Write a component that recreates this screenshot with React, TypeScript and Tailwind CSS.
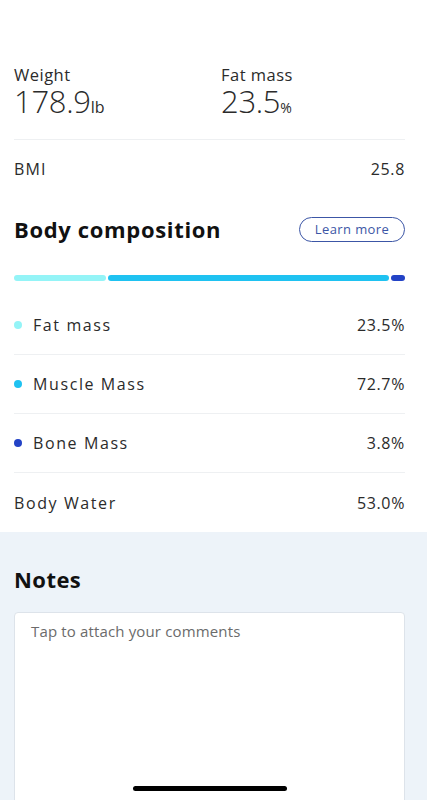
import React from "react";

const font = { fontFamily: "'Open Sans', 'Noto Sans', sans-serif" };

function Row({ dot, label, value, last }: { dot?: string; label: string; value: string; last?: boolean }) {
  return (
    <div className={`flex h-[59px] items-center justify-between ${last ? "" : "border-b border-[#eef0f2]"}`}>
      <div className="flex items-center">
        {dot ? <span className="mr-[11px] ml-[0px] h-[8px] w-[8px] rounded-full" style={{ background: dot }} /> : null}
        <span className="text-[16px] tracking-[0.1em] text-[#2b2b2b]">{label}</span>
      </div>
      <span className="text-[16px] tracking-[0.04em] text-[#2b2b2b]">{value}</span>
    </div>
  );
}

export default function App() {
  return (
    <div style={font} className="relative h-[800px] w-[427px] overflow-hidden bg-white">
      <div className="pl-[14px] pr-[22px] pt-[65px]">
        <div className="flex border-b border-[#eef0f2] pb-[20px]">
          <div className="w-[207px]">
            <div className="h-[20px] text-[16.5px] leading-[20px] font-medium tracking-[0.03em] text-[#2b2b2b]">Weight</div>
            <div className="flex h-[34px] items-baseline text-[#2b2b2b]">
              <span className="text-[31px] leading-[32px] font-light tracking-[-0.01em]">178.9</span>
              <span className="text-[16px] leading-[16px] font-medium">lb</span>
            </div>
          </div>
          <div>
            <div className="h-[20px] text-[16.5px] leading-[20px] font-medium tracking-[0.03em] text-[#2b2b2b]">Fat mass</div>
            <div className="flex h-[34px] items-baseline text-[#2b2b2b]">
              <span className="text-[31px] leading-[32px] font-light tracking-[-0.01em]">23.5</span>
              <span className="text-[14px] leading-[14px] font-medium">%</span>
            </div>
          </div>
        </div>
        <div className="flex h-[58px] items-center justify-between">
          <span className="text-[16px] tracking-[0.07em] text-[#2b2b2b]">BMI</span>
          <span className="text-[16px] tracking-[0.04em] text-[#2b2b2b]">25.8</span>
        </div>
        <div className="mt-[19px] flex h-[25px] items-center justify-between">
          <span className="text-[22px] font-bold tracking-[0.03em] text-[#111]">Body composition</span>
          <span className="flex h-[25px] w-[106px] items-center justify-center rounded-full border border-[#3c56a6] text-[13px] tracking-[0.03em] text-[#3c56a6]">Learn more</span>
        </div>
        <div className="mt-[33px] flex h-[6px] gap-[2px]">
          <div className="w-[92px] rounded-full bg-[#94f4f7]" />
          <div className="flex-1 rounded-full bg-[#1fc2f1]" />
          <div className="w-[14px] rounded-full bg-[#2343c6]" />
        </div>
        <div className="mt-[15px]">
          <Row dot="#94f4f7" label="Fat mass" value="23.5%" />
          <Row dot="#1fc2f1" label="Muscle Mass" value="72.7%" />
          <Row dot="#2343c6" label="Bone Mass" value="3.8%" />
          <Row label="Body Water" value="53.0%" last />
        </div>
      </div>
      <div className="h-[300px] bg-[#edf3f9] pl-[14px] pr-[22px] pt-[32px]">
        <div className="text-[22px] leading-[30px] font-bold tracking-[0.02em] text-[#111]">Notes</div>
        <div className="mt-[18px] h-[220px] rounded-[4px] border border-[#dde3ea] bg-white px-[16px] pt-[6px]">
          <span className="text-[15px] tracking-[0.01em] text-[#6b6b6b]">Tap to attach your comments</span>
        </div>
      </div>
      <div className="absolute bottom-[9px] left-[133px] h-[5px] w-[154px] rounded-full bg-black" />
    </div>
  );
}
